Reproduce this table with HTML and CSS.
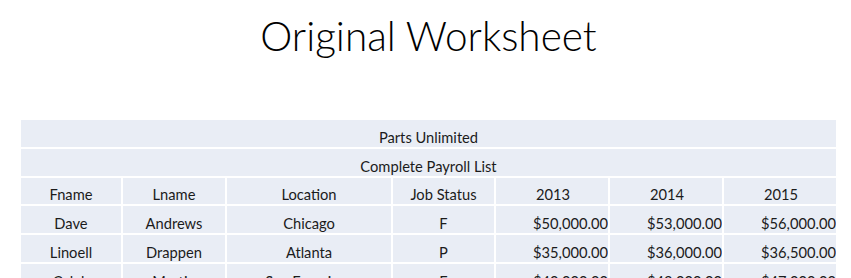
FILE: index.html
```html
<!DOCTYPE html>
<html lang="en">
<head>
<meta charset="utf-8">
<title>Original Worksheet</title>
<link rel="stylesheet" href="styles.css">
</head>
<body>
<main class="slide">
  <h1 class="title">Original Worksheet</h1>
  <div class="sheet">
    <div class="cell span">Parts Unlimited</div>
    <div class="cell span">Complete Payroll List</div>

    <div class="cell">Fname</div>
    <div class="cell">Lname</div>
    <div class="cell">Location</div>
    <div class="cell">Job Status</div>
    <div class="cell year">2013</div>
    <div class="cell year">2014</div>
    <div class="cell year">2015</div>

    <div class="cell">Dave</div>
    <div class="cell">Andrews</div>
    <div class="cell">Chicago</div>
    <div class="cell">F</div>
    <div class="cell money">$50,000.00</div>
    <div class="cell money">$53,000.00</div>
    <div class="cell money">$56,000.00</div>

    <div class="cell">Linoell</div>
    <div class="cell">Drappen</div>
    <div class="cell">Atlanta</div>
    <div class="cell">P</div>
    <div class="cell money">$35,000.00</div>
    <div class="cell money">$36,000.00</div>
    <div class="cell money">$36,500.00</div>

    <div class="cell">Caleb</div>
    <div class="cell">Martin</div>
    <div class="cell">San Francisco</div>
    <div class="cell">F</div>
    <div class="cell money">$40,000.00</div>
    <div class="cell money">$42,000.00</div>
    <div class="cell money">$47,000.00</div>
  </div>
</main>
</body>
</html>
```

FILE: styles.css
```css
html, body {
  margin: 0;
  padding: 0;
  background: #ffffff;
  overflow: hidden;
}

.slide {
  width: 815px;
  margin-left: 21px;
  font-family: Lato, "Open Sans", sans-serif;
  color: #1b1b1b;
}

.title {
  margin: 0;
  padding-top: 12px;
  height: 120px;
  box-sizing: border-box;
  text-align: center;
  font-family: Lato, "Open Sans", sans-serif;
  font-weight: 300;
  font-size: 40.5px;
  line-height: 48px;
  color: #000000;
}

.sheet {
  display: grid;
  grid-template-columns: 100px 102px 164px 101px 112px 112px 112px;
  grid-auto-rows: 26.75px;
  column-gap: 2px;
  row-gap: 2px;
  font-size: 14.7px;
}

.cell {
  background: #e9edf5;
  display: flex;
  align-items: flex-end;
  justify-content: center;
  padding-bottom: 1px;
  line-height: 17px;
  white-space: nowrap;
  overflow: hidden;
}

.span {
  grid-column: 1 / -1;
}

.year {
  justify-content: flex-start;
  padding-left: 40px;
}

.money {
  justify-content: flex-end;
  padding-right: 0;
}
```
